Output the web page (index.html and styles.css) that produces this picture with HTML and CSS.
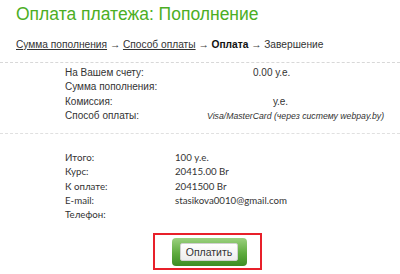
FILE: index.html
```html
<!DOCTYPE html>
<html lang="ru">
<head>
<meta charset="utf-8">
<link rel="stylesheet" href="styles.css">
</head>
<body>
<div class="page">
  <h1 class="title">Оплата платежа: Пополнение</h1>
  <nav class="crumbs">
    <a class="crumb-link" href="#">Сумма пополнения</a> <span class="arrow">→</span>
    <a class="crumb-link" href="#">Способ оплаты</a> <span class="arrow">→</span>
    <b class="crumb-current">Оплата</b> <span class="arrow">→</span>
    <span class="crumb-next">Завершение</span>
  </nav>
  <section class="block block-first">
    <div class="row">
      <span class="label">На Вашем счету:</span>
      <span class="val val-balance">0.00 у.е.</span>
    </div>
    <div class="row">
      <span class="label">Сумма пополнения:</span>
      <span class="val"></span>
    </div>
    <div class="row">
      <span class="label">Комиссия:</span>
      <span class="val val-fee">у.е.</span>
    </div>
    <div class="row">
      <span class="label">Способ оплаты:</span>
      <span class="val val-method">Visa/MasterCard (через систему webpay.by)</span>
    </div>
  </section>
  <section class="block block-second">
    <div class="row2"><span class="label2">Итого:</span><span class="val2">100 у.е.</span></div>
    <div class="row2"><span class="label2">Курс:</span><span class="val2">20415.00 Br</span></div>
    <div class="row2"><span class="label2">К оплате:</span><span class="val2">2041500 Br</span></div>
    <div class="row2"><span class="label2">E-mail:</span><span class="val2">stasikova0010@gmail.com</span></div>
    <div class="row2"><span class="label2">Телефон:</span><span class="val2"></span></div>
  </section>
  <div class="actions">
    <div class="highlight">
      <div class="btn-outer">
        <button class="btn" type="button">Оплатить</button>
      </div>
    </div>
  </div>
</div>
</body>
</html>
```

FILE: styles.css
```css
html, body {
  margin: 0;
  padding: 0;
  background: #fff;
}
.page {
  width: 400px;
  height: 274px;
  overflow: hidden;
  font-family: "Liberation Sans", Arial, sans-serif;
  color: #333;
}
.title {
  margin: 0;
  padding: 3px 0 0 16px;
  height: 22px;
  font-size: 17.5px;
  font-weight: normal;
  line-height: 22px;
  color: #4cae24;
}
.crumbs {
  box-sizing: content-box;
  padding: 13px 0 10px 16px;
  height: 14px;
  font-size: 10.2px;
  line-height: 14px;
  color: #333;
  white-space: nowrap;
  border-bottom: 1px dashed #d8d8d8;
}
.crumb-link {
  color: #333;
  text-decoration: underline;
}
.arrow {
  color: #444;
}
.crumb-current {
  color: #111;
  font-weight: bold;
}
.block {
  color: #333;
}
.block-first {
  box-sizing: content-box;
  padding: 3px 0 0 65px;
  height: 67px;
  font-size: 10px;
  border-bottom: 1px dashed #e0e0e0;
}
.row {
  display: grid;
  grid-template-columns: 140px 1fr;
  height: 14.3px;
  line-height: 14px;
  white-space: nowrap;
}
.val-balance {
  padding-left: 48px;
}
.val-fee {
  padding-left: 68px;
}
.val-method {
  font-style: italic;
  font-size: 8.7px;
  padding-left: 2px;
}
.block-second {
  box-sizing: content-box;
  padding: 16px 0 0 65px;
  height: 71px;
  font-family: Lato, "Liberation Sans", sans-serif;
  font-size: 9.7px;
}
.row2 {
  display: grid;
  grid-template-columns: 110px 1fr;
  height: 14.25px;
  line-height: 14px;
}
.actions {
  display: flex;
  justify-content: center;
  padding: 12px 0 0 15px;
}
.highlight {
  border: 2px solid #e8202a;
  padding: 3px 13px 2px 17px;
}
.btn-outer {
  width: 75px;
  height: 28px;
  border-radius: 4px;
  background: linear-gradient(#9bd17f, #5eab3e 55%, #3d8c24);
  display: flex;
  align-items: center;
  justify-content: center;
}
.btn {
  width: 58px;
  height: 18px;
  padding: 0;
  margin-left: -1px;
  border: 1px solid #d0d0d0;
  border-radius: 2px;
  background: linear-gradient(#ffffff, #ededed);
  font-family: "Liberation Sans", Arial, sans-serif;
  font-size: 10.5px;
  color: #333;
}
```
